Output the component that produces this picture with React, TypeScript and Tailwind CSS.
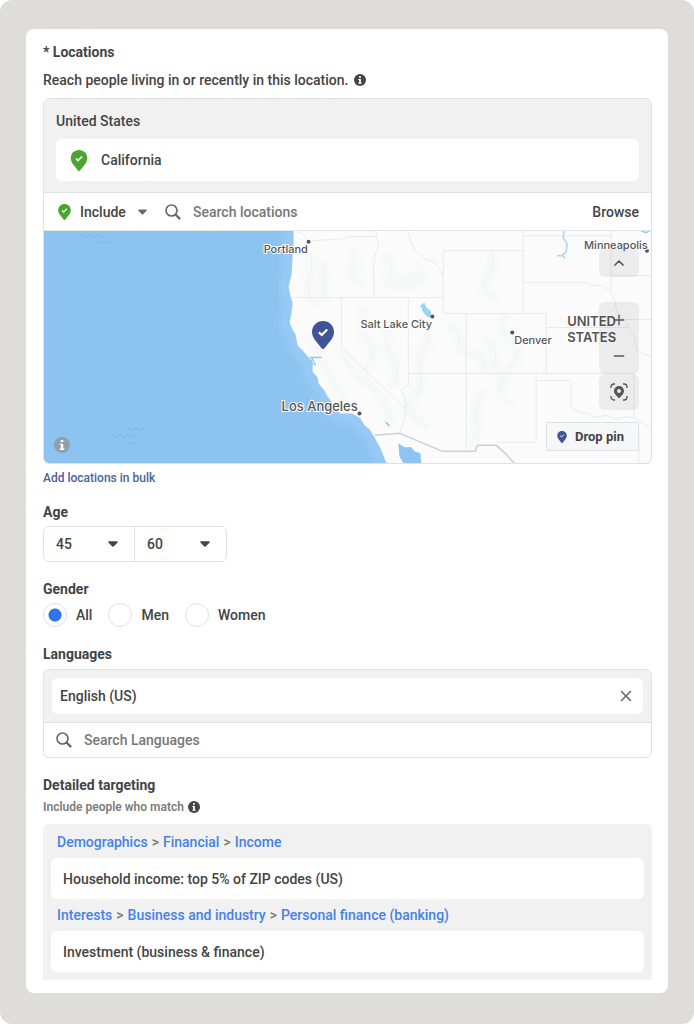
import type { ReactNode } from 'react'
import { ChevronUp, Minus, Plus, X } from 'lucide-react'

const COAST =
  'M250 0 L250 12 L249 27 L248 44 L245 56 L247 66 L249 72 L248 82 L246 92 L249 99 L252 104 L254 115 L260 121 L266 128 L269 132 L269 141 L274 147 L275 153 L281 160 L284 166 L288 171 L290 178 L297 183 L309 183 L317 188 L321 195 L326 199 L331 207 L337 218 L343 233'

const STATE_LINES = [
  'M253 1 L259 3 L265 11 L272 10 L284 9 L296 9 L306 6 L334 6',
  'M247 67 H400',
  'M332 0 L335 14 L331 28 L330 36 L331 68',
  'M364 0 L368 12 L371 19 L378 24 L383 30 L390 30 L396 38 L400 47',
  'M298 67 V117 L363 179',
  'M365 68 V155 L358 159 L361 168 L363 179 L360 190 L357 203',
  'M400 20 H480 V83 H400 Z',
  'M480 0 V20',
  'M480 5 H568',
  'M480 52 H543 L551 55 L559 55 L567 60 L572 72 L574 81 L583 91 L587 100 L591 106 L594 121 L608 126',
  'M568 0 V60',
  'M568 45 H608',
  'M579 89 H608',
  'M423 83 H503 V143',
  'M503 97 H585',
  'M365 143 H591 V187',
  'M423 83 V221',
  'M493 143 V212 H453',
  'M493 150 H528 V177 L537 182 L545 183 L553 187 L563 185 L573 189 L583 186 L591 188 L608 197',
  'M596 197 V232',
]

const RELIEF = [
  'M266 20 q4 12 0 26 t4 30',
  'M276 30 q8 8 4 20 t6 22',
  'M262 108 q14 12 20 28 t20 34',
  'M296 118 q10 22 26 34 t28 40',
  'M305 20 q10 6 4 18 t12 16',
  'M338 30 q12 -8 10 10 t16 8 t10 -14',
  'M341 48 q8 12 22 8 t20 -12',
  'M384 92 q4 18 -4 28 t-2 22',
  'M404 98 q12 -4 12 12 t14 14 t8 18',
  'M448 20 q6 16 -4 28 t12 22',
  'M462 84 q-8 16 6 26 t-4 32 t4 32',
  'M440 110 q14 2 12 18 t12 22',
  'M376 142 q6 18 -8 26 t18 30',
  'M440 160 q-10 16 -6 30 t-8 24',
  'M322 78 q-8 20 4 34 t-6 28',
  'M345 92 q-6 20 4 36 t-2 30',
]

interface Label {
  x: number
  y: number
  text: string
  size: number
}

const CITIES: Label[] = [
  { x: 220, y: 22, text: 'Portland', size: 11 },
  { x: 317, y: 97, text: 'Salt Lake City', size: 11 },
  { x: 471, y: 113, text: 'Denver', size: 11 },
  { x: 238, y: 181, text: 'Los Angeles', size: 13 },
  { x: 541, y: 18, text: 'Minneapolis', size: 11 },
]

const DOTS = [[265, 11], [389, 86], [469, 102], [316, 183], [604, 20]]

const WAVES = [
  'M37 5 q2 -3 4 0 t4 0 t4 0 t4 0 t4 0 t4 0',
  'M54 12 q2 -3 4 0 t4 0 t4 0',
  'M82 199 q2 -3 4 0 t4 0 t4 0 t4 0 t3 0',
  'M66 206 q2 -3 4 0 t4 0 t4 0 t4 0 t4 0 t4 0',
  'M82 213 q2 -3 4 0 t4 0 t4 0',
]

function Pin({ className }: { className: string }) {
  return (
    <svg viewBox="0 0 22 28" className={className} aria-hidden="true">
      <path
        d="M11 0C4.9 0 0 4.8 0 10.9c0 3.4 1.7 6.3 3.6 8.9l5.9 7.5c.8 1 2.2 1 3 0l5.9-7.5c1.900-2.600 3.600-5.500 3.600-8.900C22 4.800 17.100 0 11 0z"
        fill="currentColor"
      />
      <path d="M6.800 11.300l2.900 2.700 5.500-5.600" fill="none" stroke="#fff" strokeWidth="2.200" />
    </svg>
  )
}

function Info({ className }: { className: string }) {
  return (
    <svg viewBox="0 0 12 12" className={className} aria-hidden="true">
      <circle cx="6" cy="6" r="6" fill="currentColor" />
      <path d="M5 2.200h2v1.600H5zM4.300 5h2.600v3.700h.8v1H4.300v-1h.8V6h-.8z" fill="#fff" />
    </svg>
  )
}

function Caret({ className }: { className: string }) {
  return (
    <svg viewBox="0 0 10 6" className={className} aria-hidden="true">
      <path d="M1 .3h8c.8 0 1.100.8.6 1.300L5.700 5.500c-.4.4-1 .4-1.400 0L.4 1.600C-.1 1.100.2.300 1 .3z" fill="currentColor" />
    </svg>
  )
}

function SearchIcon() {
  return (
    <svg viewBox="0 0 16 16" className="size-4 shrink-0 text-[#666]" aria-hidden="true">
      <circle cx="6.500" cy="6.500" r="5.500" fill="none" stroke="currentColor" strokeWidth="1.600" />
      <path d="M10.500 10.500l4.600 4.600" stroke="currentColor" strokeWidth="2.200" />
    </svg>
  )
}

function LocateIcon() {
  return (
    <svg viewBox="0 0 18 18" className="size-[18px]" aria-hidden="true">
      <path
        d="M1 5V4a3 3 0 0 1 3-3h1M13 1h1a3 3 0 0 1 3 3v1M17 13v1a3 3 0 0 1-3 3h-1M5 17H4a3 3 0 0 1-3-3v-1"
        fill="none"
        stroke="currentColor"
        strokeWidth="1.300"
      />
      <path
        fillRule="evenodd"
        d="M9 3a5 5 0 0 0-5 5c0 3 3 5 5 7.500C11 13 14 11 14 8a5 5 0 0 0-5-5zm0 3a2 2 0 1 1 0 4 2 2 0 0 1 0-4z"
        fill="currentColor"
      />
    </svg>
  )
}

function MapArt() {
  return (
    <svg viewBox="0 0 608 233" preserveAspectRatio="xMidYMid slice" className="block h-full w-full">
      <defs>
        <filter id="soft">
          <feGaussianBlur stdDeviation="3" />
        </filter>
      </defs>
      <rect width="608" height="233" fill="#8cc3f0" />
      <path d={COAST} fill="none" stroke="#96c9f4" strokeWidth="22" filter="url(#soft)" />
      <path d={`${COAST} H608 V0 Z`} fill="#fbfbfb" />
      <g fill="none" stroke="#f6f7f7" strokeWidth="9" filter="url(#soft)">
        {RELIEF.map(d => <path key={d} d={d} />)}
      </g>
      <g fill="none" stroke="#f2f3f3" strokeWidth="1">
        {RELIEF.map(d => <path key={d} d={d} />)}
      </g>
      <g fill="none" stroke="#e9eaea" strokeWidth="1">
        {STATE_LINES.map(d => <path key={d} d={d} />)}
      </g>
      <path d="M331 205 L356 203 L378 212 L399 221 H432 L434 215 H453 L462 223 L471 233" fill="none" stroke="#cfcfcf" strokeWidth="1.500" />

      {/* Gulf, lakes and bays */}
      <path d="M355 213 L361 217 L368 217 L371 221 L377 223 L378 233 H360 L356 226 Z" fill="#8cc5f3" />
      <path d="M377 75 L381 72 L383 77 L387 80 L389 87 L385 87 L380 82 Z" fill="#9bd3f5" />
      <path d="M341 191 l3 1 3 4 -2 0 z" fill="#8cc5f3" />
      <path d="M266 127 h12 M268 127 l4 8 M267 129 l2 6" fill="none" stroke="#8ecbf3" strokeWidth="1.500" />
      <path d="M521 0 l-1 7 4 6 -1 8 -4 4 -5 0 M519 24 l3 4" fill="none" stroke="#a5d6f6" strokeWidth="1.500" />
      <path d="M598 0 l5 2 4 -2" fill="none" stroke="#8ecbf3" strokeWidth="1.500" />
      <g fill="none" stroke="#7bb3de" strokeWidth="1">
        {WAVES.map(d => <path key={d} d={d} />)}
      </g>

      <g fill="#555" stroke="#fff" strokeWidth="2" paintOrder="stroke" fontFamily="Inter, sans-serif" fontWeight="500">
        {DOTS.map(([x, y]) => <circle key={x} cx={x} cy={y} r="2" strokeWidth="1" />)}
        {CITIES.map(c => <text key={c.text} x={c.x} y={c.y} fontSize={c.size}>{c.text}</text>)}
        <text x="524" y="95" fontSize="13" fontWeight="600">UNITED</text>
        <text x="524" y="111" fontSize="13" fontWeight="600">STATES</text>
      </g>
    </svg>
  )
}

function AgeSelect({ label, value }: { label: string; value: number }) {
  return (
    <div className="relative w-[91px]">
      <select aria-label={label} defaultValue={value} className="h-[34px] w-full appearance-none bg-transparent pl-3 outline-none">
        {[18, 25, 35, 45, 60, 65].map(n => <option key={n}>{n}</option>)}
      </select>
      <Caret className="pointer-events-none absolute top-[14px] right-4 h-[6px] w-[10px]" />
    </div>
  )
}

function Heading({ children }: { children: ReactNode }) {
  return <h2 className="text-sm leading-5 font-bold">{children}</h2>
}

function Crumbs({ path }: { path: string[] }) {
  return (
    <nav className="flex h-8 items-center gap-1 px-1.5">
      {path.map((p, i) => (
        <span key={p} className="flex gap-1">
          {i > 0 && <span className="text-[#777]">&gt;</span>}
          <a href="#" className="text-[#4582e8]">{p}</a>
        </span>
      ))}
    </nav>
  )
}

export default function App() {
  return (
    <div className="bg-white">
      <div className="min-h-screen rounded-xl bg-[#deddd9] px-[26px] pt-[29px] pb-[31px]">
        <main className="rounded-lg bg-white pt-[13px] pr-4 pb-[13px] pl-[17px] font-['Roboto',sans-serif] text-sm leading-5 font-medium text-[#444]">
          <Heading>* Locations</Heading>
          <p className="mt-2 flex items-center gap-1.5">
            Reach people living in or recently in this location.
            <Info className="size-3" />
          </p>

          <section className="mt-2 overflow-hidden rounded-md border border-[#dfe1e3]">
            <div className="border-b border-[#dfe1e3] bg-[#f1f1f1] px-3 pt-3 pb-[11px]">
              <p>United States</p>
              <div className="mt-2 flex h-[42px] items-center gap-[13px] rounded-md bg-white px-3.5">
                <Pin className="h-[21px] w-[18px] text-[#4aa52e]" />
                California
              </div>
            </div>

            <div className="flex h-[37px] items-center pr-3 pl-3.5">
              <Pin className="h-4 w-[13px] shrink-0 text-[#4aa52e]" />
              <div className="relative ml-[9px] w-[68px] shrink-0">
                <select aria-label="Location rule" className="w-full appearance-none bg-transparent outline-none">
                  <option>Include</option>
                  <option>Exclude</option>
                </select>
                <Caret className="pointer-events-none absolute top-[7px] right-px h-[6px] w-[9px] text-[#666b73]" />
              </div>
              <label className="ml-[17px] flex grow items-center gap-3">
                <SearchIcon />
                <input
                  type="text"
                  aria-label="Search locations"
                  placeholder="Search locations"
                  className="min-w-0 grow outline-none placeholder:text-[#777]"
                />
              </label>
              <button>Browse</button>
            </div>

            <div className="relative h-[233px] border-t border-[#e3e6e8]">
              <MapArt />
              <Pin className="absolute top-[89px] left-[268px] h-[30px] w-[22px] text-[#3f5597]" />
              <button aria-label="Map details" className="absolute bottom-[10px] left-[10px]">
                <Info className="size-4 text-[#8f9fab]" />
              </button>

              <div className="absolute top-[18px] right-3 flex w-10 flex-col text-[#555]">
                <button aria-label="Collapse map" className="flex h-7 items-center justify-center rounded-md bg-black/6">
                  <ChevronUp className="size-4" strokeWidth={2.5} />
                </button>
                <div className="mt-[25px] flex flex-col rounded-md bg-black/6">
                  <button aria-label="Zoom in" className="flex h-9 items-center justify-center">
                    <Plus className="size-4" />
                  </button>
                  <button aria-label="Zoom out" className="flex h-9 items-center justify-center">
                    <Minus className="size-4" />
                  </button>
                </div>
                <button aria-label="Find my location" className="flex h-9 items-center justify-center rounded-md bg-black/6">
                  <LocateIcon />
                </button>
              </div>

              <button className="absolute right-3 bottom-3 flex h-[29px] w-[93px] items-center gap-2 rounded-xs border border-[#dde1e8] bg-[#f6f7f9] pl-2.5 text-[13px] font-bold">
                <Pin className="h-3 w-[10px] text-[#3f5597]" />
                Drop pin
              </button>
            </div>
          </section>

          <a href="#" className="mt-1 block text-xs leading-5 text-[#4a619c]">Add locations in bulk</a>

          <section className="mt-[14px]">
            <Heading>Age</Heading>
            <div className="mt-1 flex w-fit divide-x divide-[#dfe1e3] rounded-md border border-[#dfe1e3]">
              <AgeSelect label="Minimum age" value={45} />
              <AgeSelect label="Maximum age" value={60} />
            </div>
          </section>

          <section className="mt-[17px]">
            <Heading>Gender</Heading>
            <div className="mt-1 flex gap-4">
              {['All', 'Men', 'Women'].map((g, i) => (
                <label key={g} className="flex items-center gap-[9px]">
                  <input
                    type="radio"
                    name="gender"
                    defaultChecked={i === 0}
                    className="size-6 appearance-none rounded-full border border-[#dfe1e3] bg-white checked:bg-[radial-gradient(circle,#2f74e6_6px,white_7px)]"
                  />
                  {g}
                </label>
              ))}
            </div>
          </section>

          <section className="mt-[17px]">
            <Heading>Languages</Heading>
            <div className="mt-[5px] overflow-hidden rounded-md border border-[#dfe1e3]">
              <div className="border-b border-[#dfe1e3] bg-[#f1f1f1] p-2">
                <div className="flex h-9 items-center justify-between rounded-md bg-white px-2">
                  English (US)
                  <button aria-label="Remove English (US)">
                    <X className="size-[18px] text-[#666]" />
                  </button>
                </div>
              </div>
              <label className="flex h-[34px] items-center gap-3 px-3">
                <SearchIcon />
                <input
                  type="text"
                  aria-label="Search Languages"
                  placeholder="Search Languages"
                  className="min-w-0 grow outline-none placeholder:text-[#777]"
                />
              </label>
            </div>
          </section>

          <section className="mt-[17px]">
            <Heading>Detailed targeting</Heading>
            <p className="mt-0.5 flex items-center gap-1 text-xs leading-5 font-semibold text-[#7c7c7c]">
              Include people who match
              <Info className="size-3 text-[#444]" />
            </p>
            <div className="mt-[7px] rounded-t-md bg-[#f1f1f1] px-2 pt-0.5 pb-2">
              <Crumbs path={['Demographics', 'Financial', 'Income']} />
              <div className="flex h-[41px] items-center rounded-md bg-white px-3">Household income: top 5% of ZIP codes (US)</div>
              <Crumbs path={['Interests', 'Business and industry', 'Personal finance (banking)']} />
              <div className="flex h-[41px] items-center rounded-md bg-white px-3">Investment (business &amp; finance)</div>
            </div>
          </section>
        </main>
      </div>
    </div>
  )
}
